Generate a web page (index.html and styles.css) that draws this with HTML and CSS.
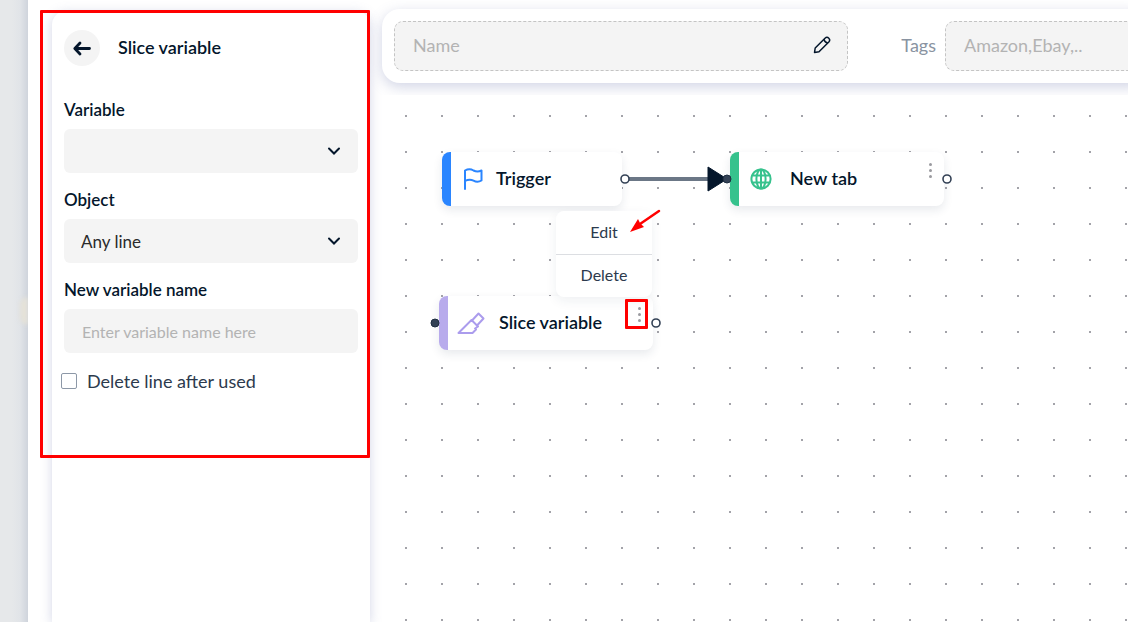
FILE: index.html
```
<!DOCTYPE html>
<html lang="en">
<head>
  <meta charset="UTF-8" />
  <meta name="viewport" content="width=device-width, initial-scale=1.0" />
  <title>Script editor | Slice variable</title>
  <link rel="stylesheet" href="styles.css">
</head>
<body>
  <div class="rail"><span class="rail-glow"></span></div>

  <aside class="sidebar">
    <form class="panel">
      <div class="panel-header">
        <button type="button" class="back-button" aria-label="Back">
          <svg width="20" height="16" viewBox="0 0 20 16" fill="none" stroke="#04162b" stroke-width="2.8" stroke-linecap="round" stroke-linejoin="round">
            <path d="M17.5 8.5H3M8 3L2.8 8.5L8 14" />
          </svg>
        </button>
        <h2>Slice variable</h2>
      </div>

      <div class="field">
        <label for="variable">Variable</label>
        <div class="select-wrap">
          <select id="variable"><option></option></select>
          <svg class="chevron" width="14" height="10" viewBox="0 0 14 10"><path d="M2 2.5L7 7.5L12 2.5" /></svg>
        </div>
      </div>

      <div class="field">
        <label for="object">Object</label>
        <div class="select-wrap">
          <select id="object"><option>Any line</option></select>
          <svg class="chevron" width="14" height="10" viewBox="0 0 14 10"><path d="M2 2.5L7 7.5L12 2.5" /></svg>
        </div>
      </div>

      <div class="field">
        <label for="newName">New variable name</label>
        <input class="text-input" type="text" id="newName" placeholder="Enter variable name here" />
      </div>

      <label class="checkbox"><input type="checkbox" id="deleteLine" /> Delete line after used</label>
    </form>
    <div class="mark mark-panel"></div>
  </aside>

  <main class="workspace">
    <div class="toolbar-area">
      <div class="toolbar">
        <div class="name-box">
          <input type="text" placeholder="Name" aria-label="Name" />
          <button type="button" class="icon-button" aria-label="Edit name">
            <svg width="18" height="18" viewBox="0 0 18 18" fill="none" stroke="#04162b" stroke-width="1.5" stroke-linejoin="round">
              <path d="M1.5 16.5L2.2 12L12 2.2Q14 0.4 15.8 2.2Q17.6 4 15.8 6L6 15.8Z" />
              <path d="M11 3.2Q11.4 6.6 14.8 7" />
            </svg>
          </button>
        </div>
        <label class="tags-label" for="tags">Tags</label>
        <input class="tags-input" type="text" id="tags" placeholder="Amazon,Ebay,.." />
      </div>
    </div>

    <div class="canvas">
      <div class="node node-trigger">
        <svg class="node-icon" width="26" height="24" viewBox="0 0 26 24" fill="none" stroke="#2a85ff" stroke-width="2" stroke-linecap="round" stroke-linejoin="round">
          <path d="M5 22V3.5Q9.5 1 13.5 3.5Q17.5 5.5 21.5 3.5V13.5Q17.5 15.8 13.5 13.6Q9.5 11.5 5 14" />
        </svg>
        <span>Trigger</span>
      </div>

      <div class="node node-tab">
        <svg class="node-icon" width="26" height="24" viewBox="0 0 26 24" fill="none" stroke="#36c28d" stroke-width="2">
          <circle cx="13" cy="12" r="9.6" />
          <ellipse cx="13" cy="12" rx="4.6" ry="9.6" />
          <path d="M13 2.4V21.6M4.5 8.5H21.5M4.5 15.5H21.5" />
        </svg>
        <span>New tab</span>
        <button type="button" class="kebab" aria-label="New tab menu"><i></i><i></i><i></i></button>
      </div>

      <div class="node node-slice">
        <svg class="node-icon" width="28" height="24" viewBox="0 0 28 24" fill="none" stroke="#ab9ced" stroke-width="2" stroke-linejoin="round">
          <path d="M1.5 22L14.500 9L21 15.500L18 17.500L19 18.500L15.500 22Z" />
          <path d="M15 9.500L21.500 2.500L26.500 7.500L20 14.500" />
        </svg>
        <span>Slice variable</span>
        <button type="button" class="kebab" aria-label="Slice variable menu"><i></i><i></i><i></i></button>
      </div>

      <svg class="wires" width="600" height="260" viewBox="0 0 600 260">
        <path d="M243 84H328" stroke="#6b7786" stroke-width="4" />
        <path d="M326 72L345 84L326 96Z" fill="#04162b" stroke="#04162b" />
        <g fill="#fff" stroke="#334155" stroke-width="1.6">
          <circle cx="243" cy="84" r="4" />
          <circle cx="565" cy="84" r="4" />
          <circle cx="274" cy="228" r="4" />
        </g>
        <g fill="#334155" stroke="#1e2d40">
          <circle cx="345" cy="84" r="4" />
          <circle cx="53" cy="228" r="4" />
        </g>
      </svg>

      <div class="menu">
        <button type="button">Edit</button>
        <button type="button">Delete</button>
      </div>

      <div class="mark mark-kebab"></div>
      <svg class="arrow" width="32" height="26" viewBox="0 0 32 26">
        <path d="M30 2L11 15" stroke="#f00" stroke-width="2.5" stroke-linecap="round" />
        <path d="M1 23L9 10L11 14L15 18Z" fill="#f00" />
      </svg>
    </div>
  </main>
</body>
</html>
```
FILE: styles.css
```
* {
  box-sizing: border-box;
}
body {
  margin: 0;
  min-height: 100vh;
  display: flex;
  overflow: hidden;
  font-family: 'Lato', sans-serif;
  font-size: 17px;
  color: #04162b;
  background: #fff;
}
button, input, select {
  font: inherit;
  color: inherit;
}
button {
  border: none;
  padding: 0;
  background: none;
  cursor: pointer;
}
h2 {
  margin: 0;
  padding-bottom: 2px;
  font-size: 18px;
  font-weight: 600;
}
.rail {
  flex: 0 0 28px;
  display: flex;
  align-items: center;
  justify-content: flex-end;
  overflow: hidden;
  background: linear-gradient(to right, #e6e8ea 12px, #e1e4e8 20px, #cfd4dc);
}
.rail-glow {
  width: 8px;
  height: 28px;
  border-radius: 14px 0 0 14px;
  background: #e5e2d8;
  filter: blur(2px);
}
.sidebar {
  position: relative;
  flex: 0 0 342px;
  display: flex;
  padding: 11px 0 0 24px;
}
.panel {
  flex: 1;
  padding: 19px 12px;
  border-radius: 14px 14px 0 0;
  background: #fff;
  box-shadow: 0 2px 12px rgba(110, 120, 175, 0.3);
}
.panel-header {
  display: flex;
  align-items: center;
  gap: 18px;
  margin-bottom: 33px;
}
.back-button {
  display: grid;
  place-items: center;
  width: 36px;
  height: 36px;
  border-radius: 50%;
  background: #f4f4f4;
}
.field {
  margin-bottom: 16px;
}
.field label {
  display: block;
  margin-bottom: 9px;
  line-height: 21px;
  font-weight: 600;
}
.select-wrap {
  display: grid;
  align-items: center;
}
.select-wrap select, .chevron {
  grid-area: 1 / 1;
}
.select-wrap select {
  appearance: none;
  width: 100%;
  height: 44px;
  padding: 0 17px;
  border: none;
  border-radius: 6px;
  background: #f4f4f4;
  color: #2b2b2b;
}
.chevron {
  justify-self: end;
  margin-right: 17px;
  fill: none;
  stroke: #04162b;
  stroke-width: 2;
  stroke-linecap: round;
  pointer-events: none;
}
.text-input {
  width: 100%;
  height: 44px;
  padding: 0 18px;
  border: none;
  border-radius: 6px;
  background: #f4f4f4;
  font-size: 16px;
}
::placeholder {
  color: #b3b3b3;
  opacity: 1;
}
.checkbox {
  display: flex;
  align-items: center;
  gap: 10px;
  margin-left: -3px;
  line-height: 24px;
  font-size: 18px;
  color: #2c3a4d;
}
.checkbox input {
  appearance: none;
  width: 16px;
  height: 16px;
  margin: 0;
  border: 1px solid #8d98a7;
  border-radius: 2px;
}
.workspace {
  flex: 1;
  min-width: 0;
  display: flex;
  flex-direction: column;
}
.toolbar-area {
  padding: 9px 0 12px 12px;
  overflow: hidden;
}
.toolbar {
  display: flex;
  align-items: center;
  margin-right: -20px;
  padding: 12px 0 12px 12px;
  border-radius: 18px;
  background: #fff;
  box-shadow: 0 4px 14px rgba(90, 100, 160, 0.28);
}
.name-box, .tags-input {
  height: 50px;
  border: 1px dashed #c4c4c4;
  border-radius: 9px;
  background: #f4f4f4;
  font-size: 18px;
}
.name-box {
  flex: 0 0 454px;
  display: flex;
  align-items: center;
  padding: 0 16px 2px 18px;
}
.name-box input {
  flex: 1;
  min-width: 0;
  padding: 0;
  border: none;
  background: none;
}
.icon-button {
  display: flex;
}
.tags-label {
  margin-left: auto;
  padding: 0 9px 2px;
  font-size: 18px;
  color: #8993a1;
}
.tags-input {
  flex: 0 1 203px;
  min-width: 0;
  padding: 0 18px 2px;
}
.canvas {
  position: relative;
  flex: 1;
  margin-left: 12px;
  background: radial-gradient(circle, #a3a3a9 1px, transparent 1.5px) 6px 3px / 36px 36px;
}
.node {
  position: absolute;
  display: flex;
  align-items: center;
  gap: 16px;
  width: 214px;
  height: 54px;
  padding-left: 9px;
  border-left: 9px solid;
  border-radius: 8px;
  background: #fff;
  box-shadow: 0 4px 10px rgba(30, 50, 80, 0.1);
  font-size: 18px;
  font-weight: 600;
}
.node span {
  padding-bottom: 3px;
  white-space: nowrap;
}
.node-trigger {
  left: 60px;
  top: 57px;
  width: 180px;
  gap: 10px;
  border-color: #2a85ff;
}
.node-tab {
  left: 348px;
  top: 57px;
  border-color: #36c28d;
}
.node-slice {
  left: 57px;
  top: 201px;
  gap: 14px;
  border-color: #b8abec;
}
.node-icon {
  flex: none;
}
.kebab {
  display: grid;
  gap: 3px;
  align-self: flex-start;
  margin: 11px 12px 0 auto;
}
.kebab i {
  width: 3px;
  height: 3px;
  border-radius: 50%;
  background: #9a9a9f;
}
.wires {
  position: absolute;
  left: 0;
  top: 0;
  pointer-events: none;
}
.menu {
  position: absolute;
  left: 174px;
  top: 116px;
  width: 96px;
  border-radius: 8px;
  background: #fff;
  box-shadow: 0 4px 12px rgba(30, 50, 80, 0.07);
}
.menu button {
  display: block;
  width: 100%;
  height: 43px;
  padding-bottom: 3px;
  font-size: 16px;
  color: #2c3a4d;
}
.menu button + button {
  border-top: 1px solid #dcdee2;
}
.mark {
  position: absolute;
  border: 3px solid #f00;
  border-radius: 1px;
  pointer-events: none;
}
.mark-panel {
  left: 12px;
  right: 0;
  top: 10px;
  height: 448px;
}
.mark-kebab {
  left: 243px;
  top: 204px;
  width: 23px;
  height: 30px;
}
.arrow {
  position: absolute;
  left: 247px;
  top: 114px;
  pointer-events: none;
}
```
